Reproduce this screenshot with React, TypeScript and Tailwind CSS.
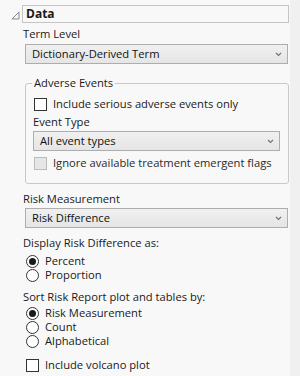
import React from "react";

const font = "font-['Open_Sans','Noto_Sans',sans-serif]";

function Chevron() {
  return (
    <svg width="7" height="5" viewBox="0 0 7 5" className="shrink-0 mt-[1px]">
      <path d="M1 1 L3.5 3.5 L6 1" fill="none" stroke="#707070" strokeWidth="1.1" />
    </svg>
  );
}

function Dropdown({ text, className }: { text: string; className: string }) {
  return (
    <div
      className={`h-[20px] flex items-center justify-between pl-[6px] pr-[5px] border border-[#adadad] bg-gradient-to-b from-[#f0f0f0] to-[#e5e5e5] text-[#111] ${className}`}
    >
      <span className="leading-[16px] whitespace-nowrap">{text}</span>
      <Chevron />
    </div>
  );
}

function Checkbox({ disabled }: { disabled?: boolean }) {
  return (
    <div
      className={`w-[13px] h-[13px] shrink-0 border ${
        disabled ? "border-[#bcbcbc] bg-[#e6e6e6]" : "border-[#333] bg-white"
      }`}
    />
  );
}

function Radio({ checked }: { checked?: boolean }) {
  return (
    <div className="w-[13px] h-[13px] shrink-0 rounded-full border border-[#333] bg-white flex items-center justify-center">
      {checked && <div className="w-[7px] h-[7px] rounded-full bg-[#1a1a1a]" />}
    </div>
  );
}

export default function App() {
  return (
    <div className={`flex w-[300px] h-[376px] ${font} text-[11.2px] text-[#1a1a1a] overflow-hidden whitespace-nowrap`}>
      <div className="w-[290px] bg-[#f8f8f8] flex flex-col">
        <div className="flex items-start pt-[5px]">
          <svg width="9" height="9" viewBox="0 0 9 9" className="ml-[11px] mt-[6px] shrink-0">
            <path d="M8 1 L8 8 L1 8 Z" fill="none" stroke="#8a8a8a" strokeWidth="1" />
          </svg>
          <div className="ml-[2px] w-[267px] h-[18px] border border-[#c4c4c4] flex items-center pl-[3px] font-bold text-[12px] leading-[16px]">
            Data
          </div>
        </div>

        <div className="ml-[23px] mt-[3px] h-[16px] leading-[16px]">Term Level</div>
        <Dropdown text="Dictionary-Derived Term" className="ml-[25px] mt-[2px] w-[263px]" />

        <fieldset className="ml-[25px] mt-[11px] w-[264px] border border-[#c8c8c8] rounded-[3px] pl-[8px] pr-[8px] pb-[12px]">
          <legend className="ml-[-2px] px-[2px] h-[16px] leading-[16px]">Adverse Events</legend>
          <div className="mt-[5px] h-[16px] flex items-center gap-[6px]">
            <Checkbox />
            <span className="leading-[16px]">Include serious adverse events only</span>
          </div>
          <div className="mt-[2px] h-[16px] leading-[16px] -ml-[1px]">Event Type</div>
          <Dropdown text="All event types" className="mt-[1px] -ml-[1px] w-[247px]" />
          <div className="mt-[4px] h-[16px] flex items-center gap-[6px]">
            <Checkbox disabled />
            <span className="leading-[16px] text-[#2a2a2a]">Ignore available treatment emergent flags</span>
          </div>
        </fieldset>

        <div className="ml-[23px] mt-[7px] h-[16px] leading-[16px]">Risk Measurement</div>
        <Dropdown text="Risk Difference" className="ml-[25px] mt-[1px] w-[263px]" />

        <div className="ml-[23px] mt-[7px] h-[16px] leading-[16px]">Display Risk Difference as:</div>
        <div className="ml-[26px] mt-[3px] flex flex-col">
          <div className="h-[14px] flex items-center gap-[6px]">
            <Radio checked />
            <span className="leading-[14px]">Percent</span>
          </div>
          <div className="h-[14px] flex items-center gap-[6px]">
            <Radio />
            <span className="leading-[14px]">Proportion</span>
          </div>
        </div>

        <div className="ml-[23px] mt-[7px] h-[16px] leading-[16px]">Sort Risk Report plot and tables by:</div>
        <div className="ml-[26px] mt-[1px] flex flex-col">
          <div className="h-[14px] flex items-center gap-[6px]">
            <Radio checked />
            <span className="leading-[14px]">Risk Measurement</span>
          </div>
          <div className="h-[14px] flex items-center gap-[6px]">
            <Radio />
            <span className="leading-[14px]">Count</span>
          </div>
          <div className="h-[14px] flex items-center gap-[6px]">
            <Radio />
            <span className="leading-[14px]">Alphabetical</span>
          </div>
        </div>

        <div className="ml-[26px] mt-[9px] h-[16px] flex items-center gap-[6px]">
          <Checkbox />
          <span className="leading-[16px]">Include volcano plot</span>
        </div>
      </div>
      <div className="w-[10px] bg-[#f0f0f0]" />
    </div>
  );
}
